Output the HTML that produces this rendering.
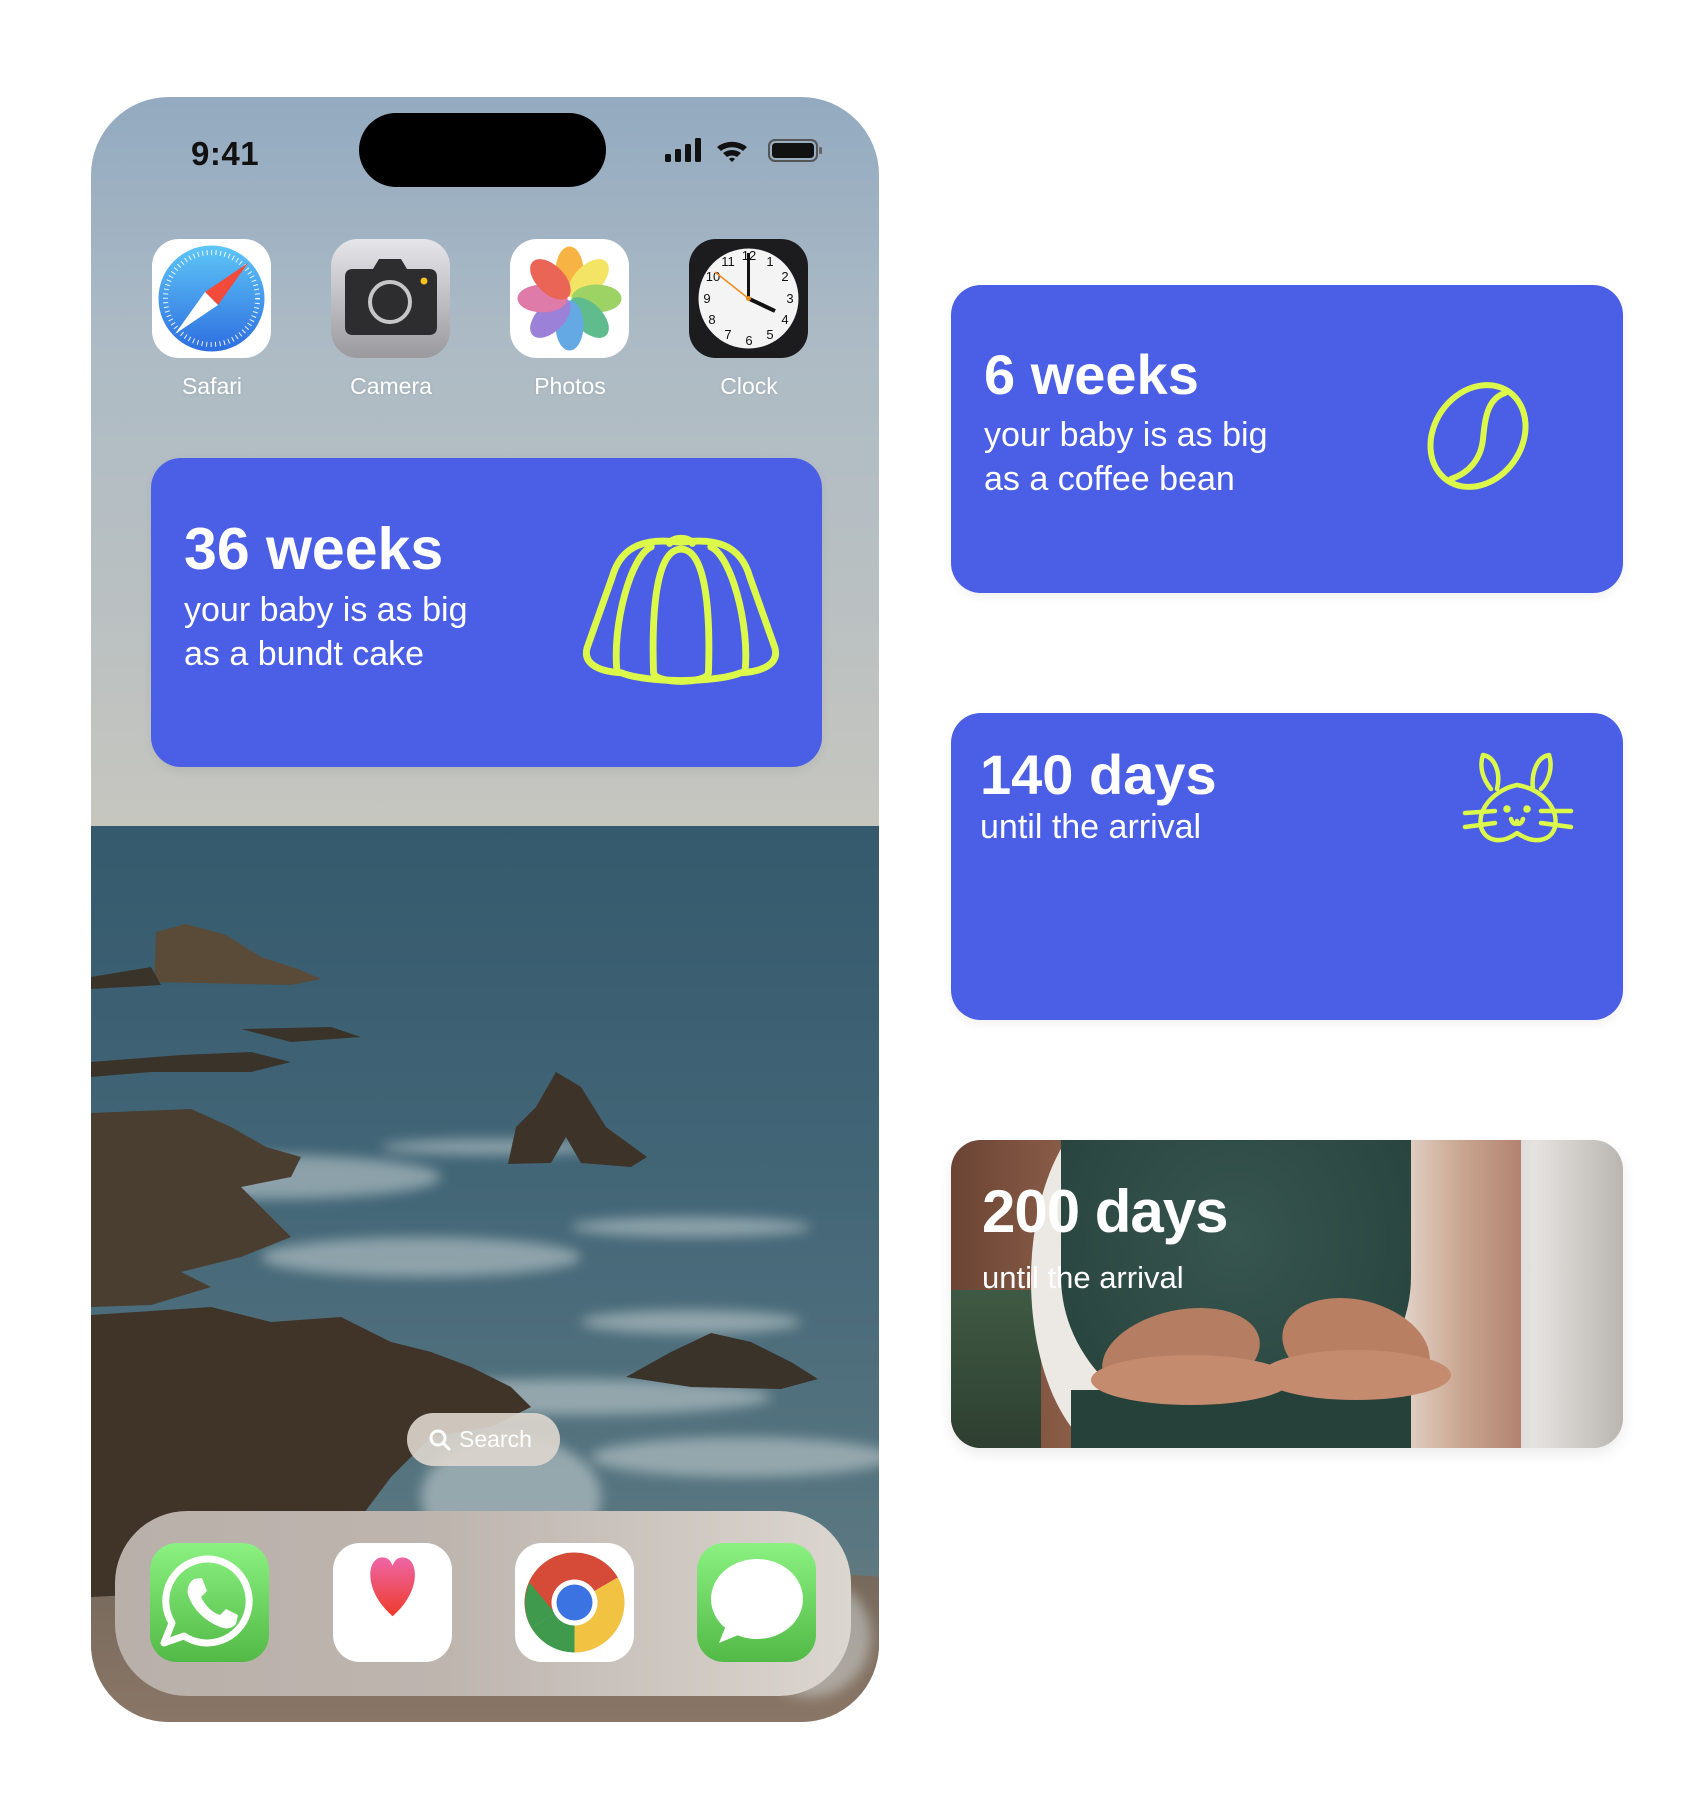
<!DOCTYPE html>
<html><head><meta charset="utf-8">
<style>
*{margin:0;padding:0;box-sizing:border-box}
body{width:1700px;height:1820px;background:#fff;position:relative;overflow:hidden;font-family:"Liberation Sans",sans-serif}
.phone{position:absolute;left:91px;top:97px;width:788px;height:1625px;border-radius:78px;overflow:hidden}
.abs{position:absolute}
.icon{position:absolute;width:119px;height:119px;border-radius:27px;overflow:hidden}
.lbl{position:absolute;width:160px;text-align:center;color:#fff;font-size:23px;top:276px;text-shadow:0 0 3px rgba(0,0,0,.1)}
.w{position:absolute;background:#4a5fe6;border-radius:30px;color:#fff;box-shadow:0 4px 10px rgba(0,0,0,.06)}
.w h1{position:absolute;font-weight:700;font-size:58px;letter-spacing:0px;line-height:1}
.w p{position:absolute;font-size:34px;line-height:44px}
</style></head><body>
<div class="phone">
<svg class="abs" style="left:0;top:0" width="788" height="1625" viewBox="0 0 788 1625">
<defs>
<linearGradient id="sky" x1="0" y1="0" x2="0" y2="1">
<stop offset="0" stop-color="#93aac0"/><stop offset=".35" stop-color="#adbbc5"/><stop offset=".75" stop-color="#bcc1c1"/><stop offset="1" stop-color="#c6c6bf"/></linearGradient>
<linearGradient id="sea" x1="0" y1="0" x2="0" y2="1">
<stop offset="0" stop-color="#355a6d"/><stop offset=".4" stop-color="#436677"/><stop offset=".8" stop-color="#5a7781"/><stop offset="1" stop-color="#7e7c74"/></linearGradient>
<linearGradient id="sand" x1="0" y1="0" x2="0" y2="1">
<stop offset="0" stop-color="#6e6458"/><stop offset="1" stop-color="#8a7666"/></linearGradient>
<filter id="bl"><feGaussianBlur stdDeviation="6"/></filter>
</defs>
<rect width="788" height="729" fill="url(#sky)"/>
<rect y="729" width="788" height="896" fill="url(#sea)"/>
<path d="M0 1420 C150 1400 300 1430 420 1460 C560 1490 700 1470 788 1480 L788 1625 L0 1625Z" fill="url(#sand)"/>
<g fill="#d4dcdc" opacity=".5" filter="url(#bl)">
<ellipse cx="180" cy="1080" rx="170" ry="22"/><ellipse cx="330" cy="1160" rx="160" ry="20"/>
<ellipse cx="600" cy="1225" rx="110" ry="12"/><ellipse cx="480" cy="1300" rx="200" ry="18"/>
<ellipse cx="650" cy="1360" rx="150" ry="20"/><ellipse cx="420" cy="1400" rx="90" ry="60"/>
<ellipse cx="720" cy="1540" rx="60" ry="60"/><ellipse cx="400" cy="1050" rx="110" ry="8"/>
<ellipse cx="600" cy="1130" rx="120" ry="10"/><ellipse cx="200" cy="1250" rx="80" ry="14"/>
</g>
<g fill="#3a3329">
<path d="M63 885 L65 835 L95 827 L135 838 L170 860 L207 872 L230 882 L200 888Z" fill="#5a4a38"/>
<path d="M0 880 L60 870 L70 888 L0 892Z"/>
<path d="M417 1067 L425 1030 L445 1010 L465 975 L490 990 L515 1030 L556 1060 L540 1070 L490 1066 L475 1040 L460 1066Z" fill="#3d3328"/>
<path d="M0 1016 L100 1012 L140 1030 L175 1050 L210 1060 L200 1080 L150 1090 L180 1120 L200 1140 L150 1160 L90 1175 L120 1190 L60 1208 L0 1210Z" fill="#4a3e30"/>
<path d="M0 1218 L120 1210 L180 1225 L250 1220 L300 1245 L340 1255 L380 1270 L420 1290 L440 1310 L400 1330 L340 1340 L300 1380 L270 1420 L240 1470 L180 1491 L0 1500Z" fill="#3f3427"/>
<path d="M535 1280 L580 1255 L620 1236 L660 1245 L700 1265 L727 1282 L690 1292 L600 1290Z"/>
<path d="M0 965 L90 958 L160 955 L200 965 L160 975 L60 975 L0 980Z"/>
<path d="M150 932 L240 930 L270 940 L200 945Z"/>
</g>
</svg>

<div class="abs" style="left:100px;top:38px;font-size:33px;font-weight:700;color:#111;letter-spacing:.5px">9:41</div>
<div class="abs" style="left:268px;top:16px;width:247px;height:74px;background:#000;border-radius:37px"></div>
<svg class="abs" style="left:574px;top:41px" width="160" height="26" viewBox="0 0 160 26">
<rect x="0" y="16" width="6" height="8" rx="1.5" fill="#111"/><rect x="10" y="11" width="6" height="13" rx="1.5" fill="#111"/><rect x="20" y="6" width="6" height="18" rx="1.5" fill="#111"/><rect x="30" y="0" width="6" height="24" rx="1.5" fill="#111"/>
<path d="M52 9 A24 24 0 0 1 82 9 L78 13 A18 18 0 0 0 56 13Z" fill="#111"/>
<path d="M58 15 A15 15 0 0 1 76 15 L72 19 A9 9 0 0 0 62 19Z" fill="#111"/>
<path d="M64 21 L67 24 L70 21 A4 4 0 0 0 64 21Z" fill="#111"/>
<rect x="104" y="2" width="48" height="21" rx="6" fill="none" stroke="#555" stroke-width="2"/>
<rect x="107" y="5" width="42" height="15" rx="3.5" fill="#111"/>
<rect x="154" y="9" width="3" height="7" rx="1" fill="#666"/>
</svg>

<div class="icon" style="left:61px;top:142px;background:#fff">
<svg width="119" height="119" viewBox="0 0 119 119"><defs><linearGradient id="sf" x1="0" y1="0" x2="0" y2="1"><stop offset="0" stop-color="#5ec6f7"/><stop offset="1" stop-color="#2e6ee0"/></linearGradient></defs>
<circle cx="59.5" cy="59.5" r="53" fill="url(#sf)"/>
<circle cx="59.5" cy="59.5" r="46" fill="none" stroke="#fff" stroke-width="5" stroke-dasharray="1 3.5" opacity=".9"/>
<path d="M96 24 L66 66 L53 53Z" fill="#f24a3b"/><path d="M23 95 L53 53 L66 66Z" fill="#fff"/></svg></div>
<div class="icon" style="left:240px;top:142px;background:linear-gradient(#e6e6ea,#9a9a9e)">
<svg width="119" height="119" viewBox="0 0 119 119"><path d="M14 38 Q14 30 22 30 L42 30 L48 20 L70 20 L76 30 L98 30 Q106 30 106 38 L106 88 Q106 96 98 96 L22 96 Q14 96 14 88Z" fill="#2d2d2f"/><circle cx="59" cy="63" r="20" fill="none" stroke="#c6c6c8" stroke-width="4"/><circle cx="93" cy="42" r="3.5" fill="#f4c21c"/></svg></div>
<div class="icon" style="left:419px;top:142px;background:#fff">
<svg width="119" height="119" viewBox="0 0 119 119"><g transform="translate(59.5 59.5)" opacity=".85">
<ellipse cx="0" cy="-27" rx="14" ry="25" fill="#f6a623"/>
<ellipse cx="0" cy="-27" rx="14" ry="25" fill="#f2e04a" transform="rotate(45)"/>
<ellipse cx="0" cy="-27" rx="14" ry="25" fill="#8ccb4a" transform="rotate(90)"/>
<ellipse cx="0" cy="-27" rx="14" ry="25" fill="#45b07a" transform="rotate(135)"/>
<ellipse cx="0" cy="-27" rx="14" ry="25" fill="#4b9be0" transform="rotate(180)"/>
<ellipse cx="0" cy="-27" rx="14" ry="25" fill="#8a6bd0" transform="rotate(225)"/>
<ellipse cx="0" cy="-27" rx="14" ry="25" fill="#d9649a" transform="rotate(270)"/>
<ellipse cx="0" cy="-27" rx="14" ry="25" fill="#e84a3a" transform="rotate(315)"/></g></svg></div>
<div class="icon" style="left:598px;top:142px;background:#1c1c1e">
<svg width="119" height="119" viewBox="0 0 119 119"><circle cx="59.5" cy="59.5" r="50" fill="#f4f4f4"/>
<g font-family="Liberation Sans" font-size="13" text-anchor="middle" fill="#111">
<text x="60" y="21">12</text><text x="81" y="27">1</text><text x="96" y="42">2</text><text x="101" y="64">3</text><text x="96" y="85">4</text><text x="81" y="100">5</text><text x="60" y="106">6</text><text x="39" y="100">7</text><text x="23" y="85">8</text><text x="18" y="64">9</text><text x="24" y="42">10</text><text x="39" y="27">11</text></g>
<line x1="59.5" y1="59.5" x2="59.5" y2="14" stroke="#111" stroke-width="3"/><line x1="59.5" y1="59.5" x2="86" y2="72" stroke="#111" stroke-width="4"/><line x1="59.5" y1="59.5" x2="26" y2="33" stroke="#f08a1c" stroke-width="1.5"/><circle cx="59.5" cy="59.5" r="2.5" fill="#f08a1c"/></svg></div>
<div class="lbl" style="left:41px">Safari</div>
<div class="lbl" style="left:220px">Camera</div>
<div class="lbl" style="left:399px">Photos</div>
<div class="lbl" style="left:578px">Clock</div>

<div class="w" style="left:60px;top:361px;width:671px;height:309px">
<h1 style="left:33px;top:62px;font-size:59px">36 weeks</h1>
<p style="left:33px;top:130px">your baby is as big<br>as a bundt cake</p>
<svg class="abs" style="left:427px;top:75px" width="206" height="156" viewBox="0 0 180 136" fill="none" stroke="#dcf94a" stroke-width="6" stroke-linejoin="round" stroke-linecap="round">
<path d="M90 8 C60 4 38 10 30 38 L8 100 C4 114 18 121 38 122 C60 131 120 131 142 122 C162 121 176 114 172 100 L150 38 C142 10 120 4 90 8Z"/>
<path d="M64 12 C46 20 30 80 34 120"/>
<path d="M116 12 C134 20 150 80 146 120"/>
<path d="M90 14 C70 14 64 60 66 122 C68 132 112 132 114 122 C116 60 110 14 90 14Z"/>
<path d="M80 9 C82 3 98 3 100 9"/>
</svg>
</div>

<div class="abs" style="left:316px;top:1316px;width:153px;height:53px;border-radius:27px;background:rgba(222,214,206,.9);color:#fff;font-size:23px;line-height:53px;padding-left:52px">Search
<svg class="abs" style="left:21px;top:15px" width="24" height="24" viewBox="0 0 24 24"><circle cx="10" cy="10" r="7" fill="none" stroke="#fff" stroke-width="3"/><line x1="15" y1="15" x2="21" y2="21" stroke="#fff" stroke-width="3" stroke-linecap="round"/></svg></div>

<div class="abs" style="left:24px;top:1414px;width:736px;height:185px;border-radius:72px;background:linear-gradient(90deg,#b8b0a9,#bdb5ae 45%,#dcd6d0 100%)"></div>
<div class="icon" style="left:59px;top:1446px;background:linear-gradient(#8bf282,#52b946)">
<svg width="119" height="119" viewBox="0 0 119 119"><path d="M59 16 A42 42 0 1 1 34 93 L14 100 L22 80 A42 42 0 0 1 59 16Z" fill="none" stroke="#fff" stroke-width="7" stroke-linejoin="round"/><path d="M44 36 L52 35 L57 48 L51 54 Q58 68 70 72 L76 66 L88 72 L86 81 Q80 88 70 84 Q46 74 38 52 Q36 42 44 36Z" fill="#fff"/></svg></div>
<div class="icon" style="left:242px;top:1446px;background:#fff">
<svg width="119" height="119" viewBox="0 0 119 119"><defs><linearGradient id="ht" x1="0" y1="0" x2="0" y2="1"><stop offset="0" stop-color="#ee66a6"/><stop offset="1" stop-color="#ee3b2a"/></linearGradient></defs><path d="M59 58 C38 40 40 16 52 16 C56 16 58 19 59 22 C60 19 62 16 66 16 C78 16 80 40 59 58Z" transform="translate(-23 -8) scale(1.4)" fill="url(#ht)"/></svg></div>
<div class="icon" style="left:424px;top:1446px;background:#fff">
<svg width="119" height="119" viewBox="0 0 119 119"><g transform="translate(59.5 59.5)">
<path d="M0 0 L0 -50 A50 50 0 0 1 43.3 -25Z" fill="#d64a38"/><path d="M0 0 L0 -50 A50 50 0 0 0 -43.3 25 Z" fill="#d64a38"/>
<path d="M0 0 L43.3 -25 A50 50 0 0 1 0 50Z" fill="#f2c343"/>
<path d="M0 0 L0 50 A50 50 0 0 1 -43.3 25Z" fill="#3f9a4d"/><path d="M0 0 L-43.3 25 A50 50 0 0 1 -45 -20 L-20 10Z" fill="#3f9a4d"/>
<circle r="23" fill="#fff"/><circle r="18" fill="#3b74e2"/></g></svg></div>
<div class="icon" style="left:606px;top:1446px;background:linear-gradient(#8bf282,#52b946)">
<svg width="119" height="119" viewBox="0 0 119 119"><ellipse cx="60" cy="56" rx="46" ry="40" fill="#fff"/><path d="M30 80 L22 100 L46 90Z" fill="#fff"/></svg></div>
</div>

<div class="w" style="left:951px;top:285px;width:672px;height:308px">
<h1 style="left:33px;top:62px;font-size:56px">6 weeks</h1>
<p style="left:33px;top:128px">your baby is as big<br>as a coffee bean</p>
<svg class="abs" style="left:474px;top:94px" width="106" height="114" viewBox="0 0 106 114" fill="none" stroke="#dcf94a" stroke-width="6" stroke-linecap="round">
<ellipse cx="53" cy="57" rx="44" ry="54" transform="rotate(35 53 57)"/>
<path d="M80 14 C62 20 60 40 58 60 C56 80 44 94 26 100"/>
</svg>
</div>

<div class="w" style="left:951px;top:713px;width:672px;height:307px">
<h1 style="left:29px;top:34px;font-size:56px">140 days</h1>
<p style="left:29px;top:92px">until the arrival</p>
<svg class="abs" style="left:510px;top:36px" width="116" height="102" viewBox="0 0 116 102" fill="none" stroke="#dcf94a" stroke-width="4.5" stroke-linecap="round" stroke-linejoin="round">
<path d="M30 40 C22 30 18 18 22 6 C34 8 40 24 36 40"/>
<path d="M72 40 C70 24 76 8 88 6 C92 18 88 32 80 40"/>
<path d="M20 78 C16 58 36 40 56 36 C80 40 98 58 94 78 C90 92 74 96 56 84 C40 96 24 92 20 78Z"/>
<circle cx="46" cy="60" r="1.5" fill="#dcf94a"/><circle cx="66" cy="60" r="1.5" fill="#dcf94a"/>
<path d="M50 70 C52 76 56 76 56 72 C56 76 60 76 62 70"/>
<path d="M4 64 L34 62 M4 78 L34 74 M110 62 L80 62 M110 78 L80 74"/>
</svg>
</div>

<div class="abs" style="left:951px;top:1140px;width:672px;height:308px;border-radius:30px;overflow:hidden;background:#d7d5d2;box-shadow:0 6px 14px rgba(0,0,0,.08)">
<div class="abs" style="left:0;top:0;width:180px;height:308px;background:linear-gradient(90deg,#6b4434,#9a6a52)"></div>
<div class="abs" style="left:0;top:150px;width:90px;height:160px;background:linear-gradient(#3f5a44,#2e3f30)"></div>
<div class="abs" style="left:545px;top:0;width:127px;height:308px;background:linear-gradient(90deg,#d4d2d0,#e5e3e0 30%,#bab5b0)"></div>
<div class="abs" style="left:420px;top:0;width:150px;height:308px;background:linear-gradient(90deg,#f0ece8,#caa690 60%,#b28370)"></div>
<div class="abs" style="left:80px;top:-40px;width:190px;height:360px;border-radius:50%;background:#ece8e4"></div>
<div class="abs" style="left:110px;top:-30px;width:350px;height:320px;border-radius:0 0 48% 48%;background:radial-gradient(ellipse at 50% 40%,#37564f,#25403a)"></div>
<div class="abs" style="left:120px;top:250px;width:340px;height:70px;background:#26403a"></div>
<div class="abs" style="left:150px;top:170px;width:160px;height:90px;border-radius:50%;background:#b57d62;transform:rotate(-12deg)"></div>
<div class="abs" style="left:330px;top:160px;width:150px;height:95px;border-radius:50%;background:#b97f63;transform:rotate(14deg)"></div>
<div class="abs" style="left:140px;top:215px;width:200px;height:50px;border-radius:50%;background:#c48b6e"></div>
<div class="abs" style="left:310px;top:210px;width:190px;height:50px;border-radius:50%;background:#c48b6e"></div>
<div style="position:absolute;left:31px;top:42px;color:#fff;font-weight:700;font-size:60px;line-height:1;letter-spacing:-1px">200 days</div>
<div style="position:absolute;left:31px;top:122px;color:#fff;font-size:31px;line-height:1">until the arrival</div>
</div>
</body></html>
